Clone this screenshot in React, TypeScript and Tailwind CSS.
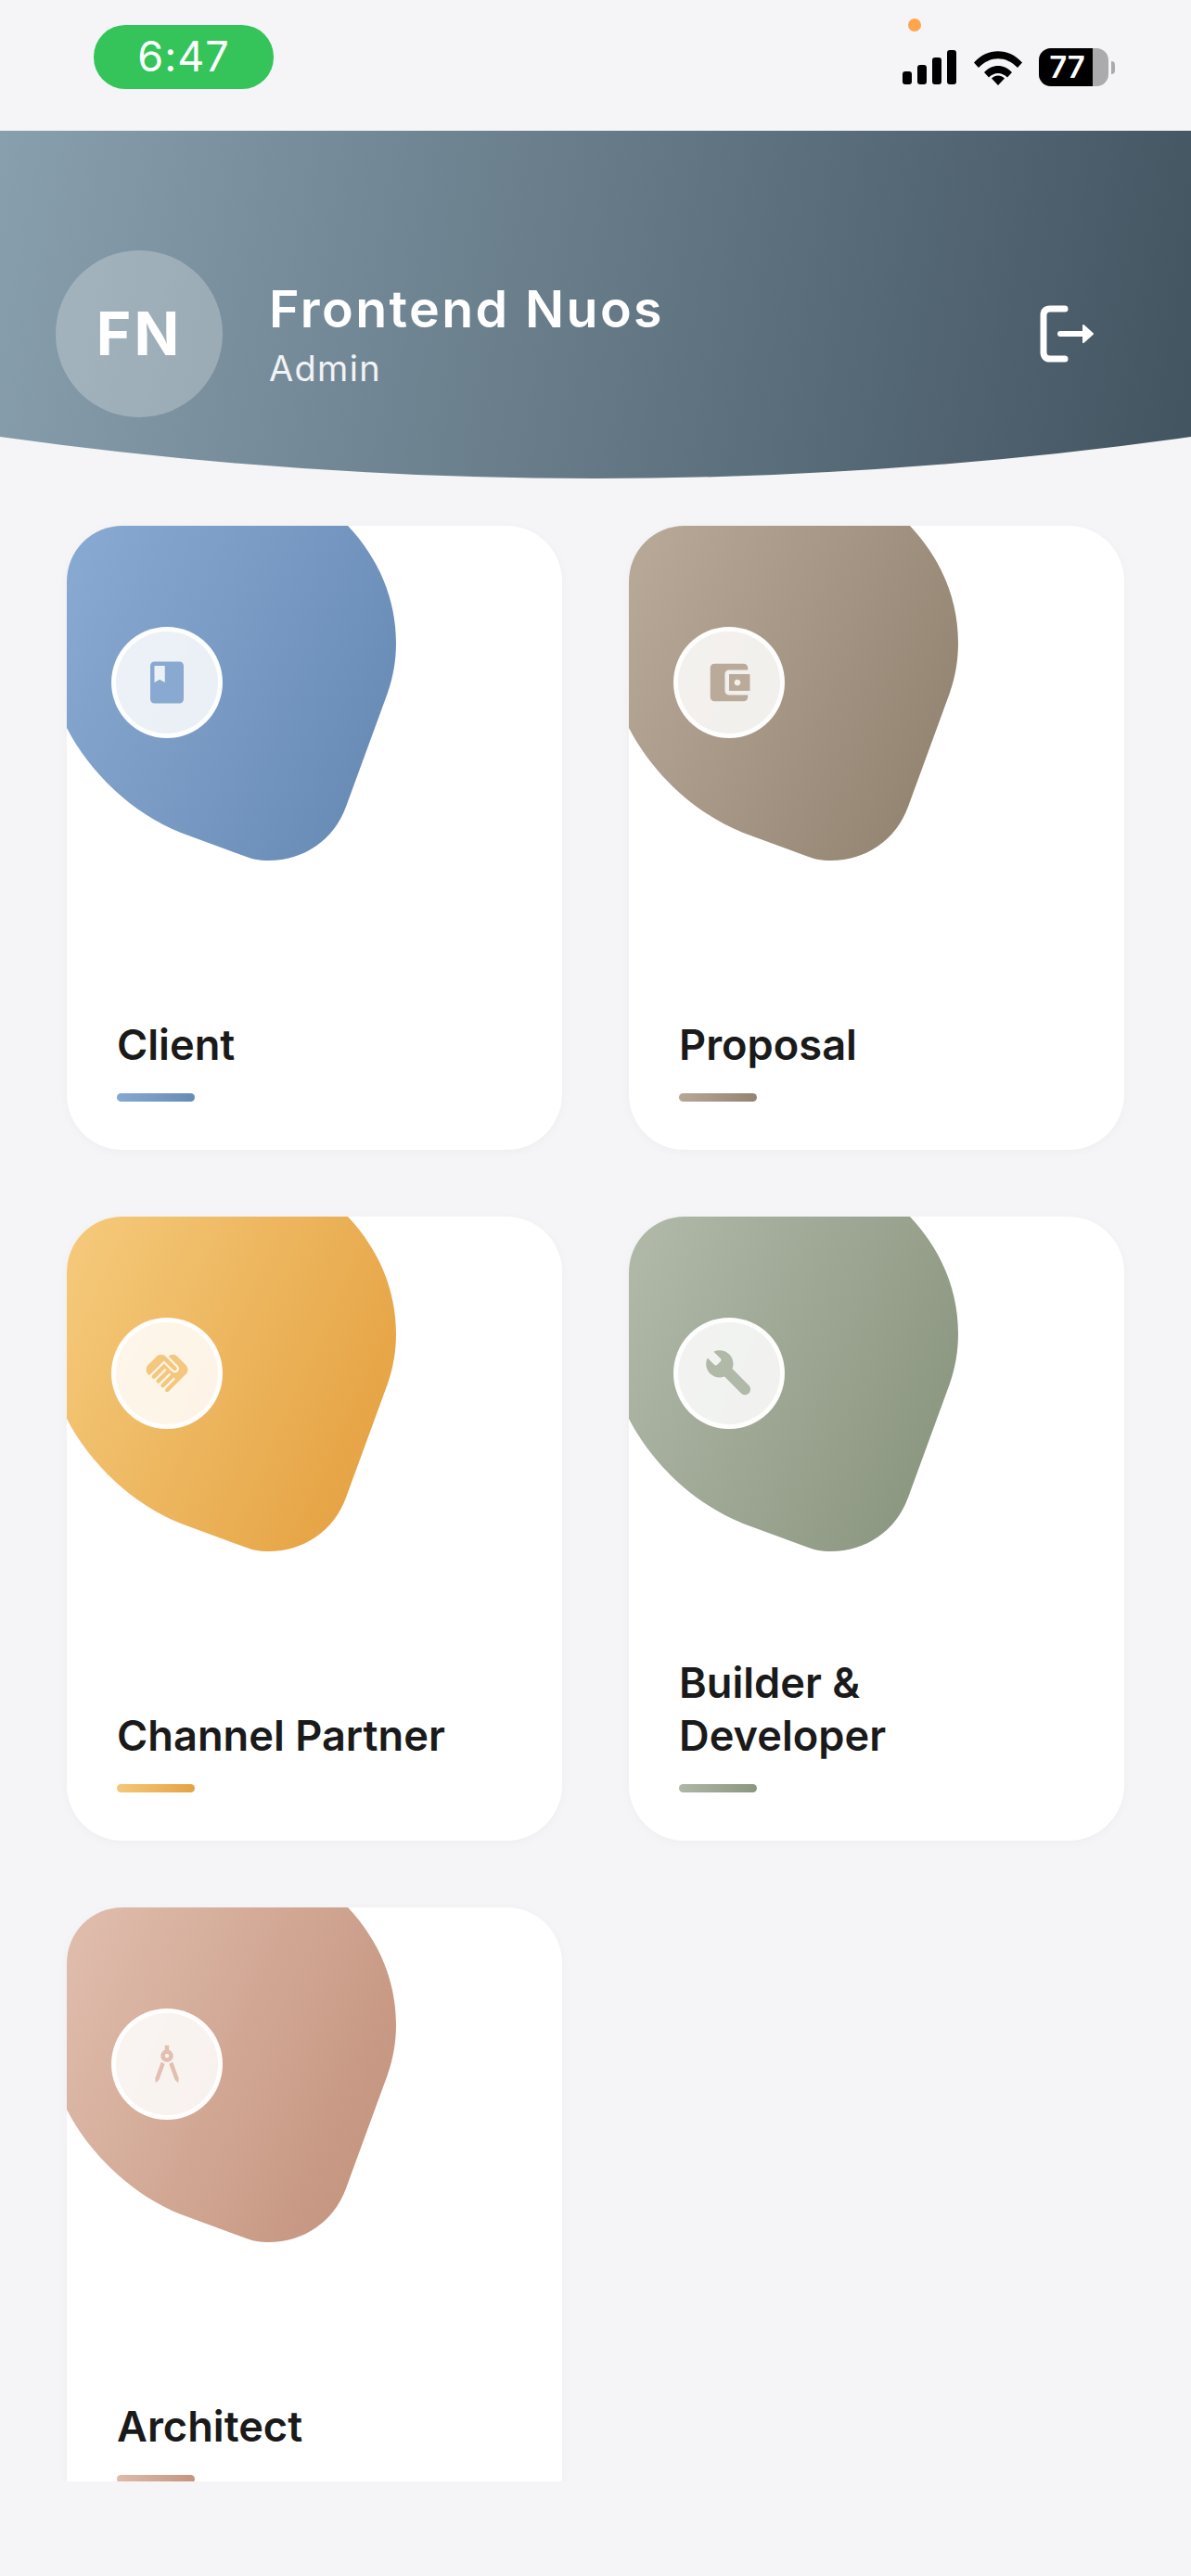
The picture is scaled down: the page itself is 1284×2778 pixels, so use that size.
import React from 'react';
import { MdAccountBalanceWallet, MdArchitecture, MdBook, MdHandshake } from 'react-icons/md';

function WrenchIcon({ className }: { className?: string }) {
  return (
    <svg viewBox="0 0 24 24" width={54} height={54} fill="currentColor" className={className}>
      <path d="M12.09 2.91C10.08.9 7.07.49 4.65 1.67l3.26 3.26c.39.39.39 1.02 0 1.41L6.34 7.91c-.39.4-1.02.4-1.41 0L1.67 4.65C.49 7.08.9 10.07 2.91 12.09c1.86 1.86 4.58 2.35 6.89 1.48l7.96 7.96c1.03 1.03 2.69 1.03 3.71 0 1.03-1.03 1.03-2.69 0-3.71L13.56 9.8c.88-2.31.39-5.03-1.47-6.89z" />
    </svg>
  );
}

const cards = [
  { id: 'client', label: 'Client', from: '#87A8D0', to: '#688BB6', icon: <MdBook size={54} className="text-[#89A9D0]" />, bar: 'from-[#87A8D0] to-[#688BB6]' },
  { id: 'proposal', label: 'Proposal', from: '#B7A797', to: '#938472', icon: <MdAccountBalanceWallet size={54} className="text-[#BAAA9A]" />, bar: 'from-[#B7A797] to-[#938472]' },
  { id: 'channel', label: 'Channel Partner', from: '#F4C878', to: '#E5A242', icon: <MdHandshake size={54} className="text-[#F3C77E]" />, bar: 'from-[#F4C878] to-[#E5A242]' },
  { id: 'builder', label: 'Builder & Developer', from: '#AFB7A7', to: '#8B967F', icon: <WrenchIcon className="text-[#B0B8A8]" />, bar: 'from-[#AFB7A7] to-[#8B967F]' },
  { id: 'architect', label: 'Architect', from: '#DFBBAB', to: '#C4947E', icon: <MdArchitecture size={54} className="text-[#E2BFAF]" />, bar: 'from-[#DFBBAB] to-[#C4947E]' },
];

function StatusBar() {
  return (
    <div className="relative flex h-[141px] items-start justify-between pl-[101px] pr-[82px] pt-[27px]">
      <div className="flex h-[69px] w-[194px] items-center justify-center rounded-[34px] bg-[#34C45A] pb-[2px] text-[45px] font-normal tracking-[1px] text-white">
        6:47
      </div>
      <div className="absolute left-[979px] top-[20px] h-[14px] w-[14px] rounded-full bg-[#FFA64D]" />
      <div className="flex items-center pt-[25px]">
        <svg width={58} height={38} viewBox="0 0 58 38" fill="#000" className="mr-[19px]">
          <rect x="0" y="23" width="10" height="14" rx="3" />
          <rect x="16" y="16" width="10" height="21" rx="3" />
          <rect x="32" y="8" width="10" height="29" rx="3" />
          <rect x="48" y="0" width="10" height="37" rx="3" />
        </svg>
        <svg width={52} height={38} viewBox="0 0 52 38" className="mr-[18px]">
          <path d="M0 13.5C14-3 38-3 52 13.5l-5 5.5C34.500 6 17.500 6 5 19Z" fill="#000" />
          <path d="M11 24C19.500 14.500 32.500 14.500 41 24l-5 5.500C30 23.500 22 23.500 16 29.500Z" fill="#000" />
          <path d="M19 30.500C23 26.500 29 26.500 33 30.500l-7 7.500Z" fill="#000" />
        </svg>
        <div className="relative flex h-[41px] w-[75px] overflow-hidden rounded-[13px] bg-[#ABABAE]">
          <div className="flex h-full w-[58px] items-center justify-center bg-black pl-[3px] text-[33px] font-semibold text-white">77</div>
        </div>
        <div className="ml-[3px] h-[14px] w-[4px] rounded-r-full bg-[#ABABAE]" />
      </div>
    </div>
  );
}

function Header() {
  return (
    <div className="flex h-[375px] items-center justify-between bg-linear-[100deg] from-[#889FAD] to-[#435461] pl-[60px] pr-[103px] pt-[63px] [clip-path:path('M0_0H1284V330Q642_420_0_330Z')]">
      <div className="flex items-center">
        <div className="flex h-[180px] w-[180px] items-center justify-center rounded-full bg-white/25 text-[64px] font-bold tracking-[3px] text-white">
          FN
        </div>
        <div className="ml-[50px] flex flex-col">
          <div className="text-[55.5px] leading-[66px] font-semibold tracking-[2.4px] text-white">Frontend Nuos</div>
          <div className="mt-[7px] text-[38px] leading-[48px] font-normal tracking-[1.3px] text-white/90">Admin</div>
        </div>
      </div>
      <svg width={60} height={62} viewBox="0 0 60 62" fill="none" stroke="#fff" strokeWidth={7} strokeLinecap="round" strokeLinejoin="round">
        <path d="M27 4H11C6.500 4 4 6.500 4 11V51C4 55.500 6.500 58 11 58H27" />
        <path d="M22 31H50" strokeWidth={6} />
        <path d="M47 22L57 31L47 40Z" fill="#fff" strokeWidth={2} />
      </svg>
    </div>
  );
}

function Card({ card }: { card: (typeof cards)[number] }) {
  return (
    <div className="relative flex h-[673px] flex-col justify-end overflow-hidden rounded-[60px] bg-white pb-[52px] pl-[54px] pr-[54px] shadow-[0_2px_12px_rgba(0,0,0,0.03)]">
      <svg className="absolute left-0 top-0" width={360} height={365} viewBox="0 0 360 365">
        <defs>
          <linearGradient id={`blob-${card.id}`} x1="0" y1="0.2" x2="1" y2="0.65">
            <stop offset="0" stopColor={card.from} />
            <stop offset="1" stopColor={card.to} />
          </linearGradient>
        </defs>
        <path
          d="M303 0C337 36 355 80 355 126C355 145 352 162 346 180L301 303C288 339 255 361 218 361C207 361 198 359 191 356L123 331C70 310 24 265 0 218V0Z"
          fill={`url(#blob-${card.id})`}
        />
      </svg>
      <div className="absolute left-[48px] top-[109px] flex h-[120px] w-[120px] items-center justify-center rounded-full border-[5px] border-white/90 bg-white/85">
        {card.icon}
      </div>
      <div className="relative text-[45.2px] leading-[57px] font-semibold text-[#1A1A1A]">{card.label}</div>
      <div className={`relative mt-[24px] h-[9px] w-[84px] rounded-full bg-linear-to-r ${card.bar}`} />
    </div>
  );
}

export default function App() {
  return (
    <div className="flex h-[2778px] w-[1284px] flex-col overflow-hidden bg-[#F5F5F7] font-['Inter',sans-serif]">
      <StatusBar />
      <Header />
      <div className="h-[2160px] overflow-hidden px-[72px] pt-[51px]">
        <div className="grid grid-cols-2 gap-x-[72px] gap-y-[72px]">
          {cards.map((card) => (
            <Card key={card.id} card={card} />
          ))}
        </div>
      </div>
    </div>
  );
}
